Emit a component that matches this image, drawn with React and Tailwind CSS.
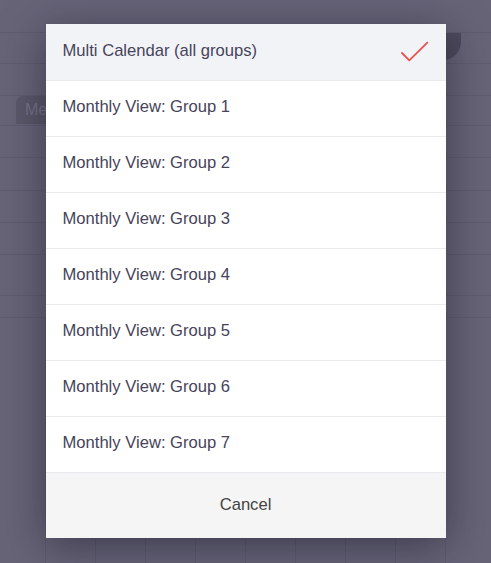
import React from 'react';

// background grid rows (height includes the 1px line)
const rowHeights = [33, 31, 32, 30, 32, 33, 32, 32, 41, 22];

const options = [
  'Multi Calendar (all groups)',
  'Monthly View: Group 1',
  'Monthly View: Group 2',
  'Monthly View: Group 3',
  'Monthly View: Group 4',
  'Monthly View: Group 5',
  'Monthly View: Group 6',
  'Monthly View: Group 7',
];

const Background = () => (
  <div className="flex h-[563px] flex-col bg-[#676478]">
    {rowHeights.map((h, i) => (
      <div
        key={i}
        style={{ height: h }}
        className="flex shrink-0 items-start border-b border-[#5f5c70]"
      >
        {i === 1 && (
          <div className="ml-auto mr-[30px] h-[27px] w-[70px] rounded-br-[18px] bg-[#4d4b5c]" />
        )}
        {i === 3 && (
          <div className="ml-4 flex h-[28px] w-[60px] items-center rounded-tl-[7px] bg-[#5a5869] pl-[9px] text-[16px] text-[#76748a]">
            Menu
          </div>
        )}
      </div>
    ))}
    <div className="flex flex-1">
      <div className="w-[45px] shrink-0" />
      {Array.from({ length: 9 }).map((_, i) => (
        <div key={i} className="w-[50px] shrink-0 border-l border-[#5f5c70]" />
      ))}
    </div>
  </div>
);

const Check = () => (
  <svg width="28" height="22" viewBox="0 0 28 22" fill="none">
    <path d="M1 12 L8.3 19.4 L26.3 1.7" stroke="#ea5250" strokeWidth="1.8" strokeLinecap="round" strokeLinejoin="round" />
  </svg>
);

export default function App() {
  return (
    <div className="relative h-[563px] w-[491px] overflow-hidden font-['Liberation_Sans',Arial,sans-serif]">
      <Background />
      <div className="absolute inset-0 flex justify-center pt-[24px]">
        <div className="flex h-[514px] w-[400px] flex-col bg-white shadow-[0_8px_40px_rgba(20,18,35,0.5)]">
          {options.map((label, i) => (
            <div
              key={label}
              className={`flex h-14 shrink-0 items-center justify-between px-[17px] text-[16.6px] text-[#46445a] ${i === 0 ? 'bg-[#f2f3f7]' : 'border-t border-[#e9e9ee] bg-white'}`}
            >
              <span className="-mt-[2px]">{label}</span>
              {i === 0 && <Check />}
            </div>
          ))}
          <div className="flex flex-1 items-center justify-center border-t border-[#e9e9ee] bg-[#f5f5f5] text-[16.6px] text-[#444444]">
            Cancel
          </div>
        </div>
      </div>
    </div>
  );
}
